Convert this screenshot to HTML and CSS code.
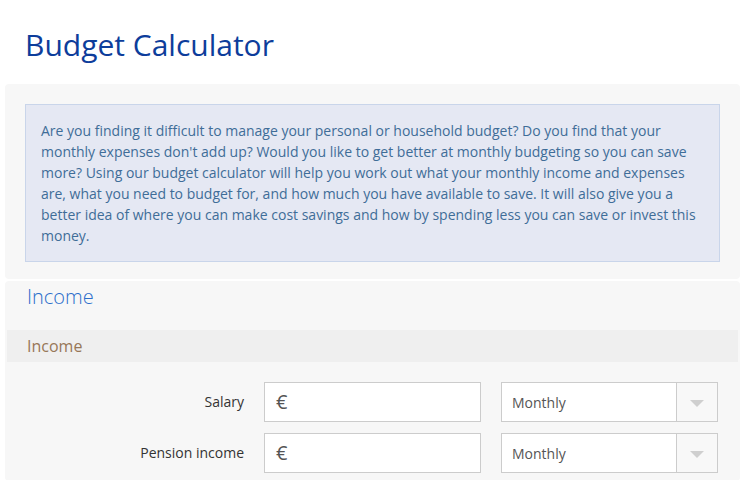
FILE: index.html
```html
<!DOCTYPE html>
<html lang="en">
<head>
<meta charset="utf-8">
<title>Budget Calculator</title>
<link rel="stylesheet" href="styles.css">
</head>
<body>
<h1 class="title">Budget Calculator</h1>
<section class="panel intro-panel">
  <div class="info">Are you finding it difficult to manage your personal or household budget? Do you find that your monthly expenses don't add up? Would you like to get better at monthly budgeting so you can save more? Using our budget calculator will help you work out what your monthly income and expenses are, what you need to budget for, and how much you have available to save. It will also give you a better idea of where you can make cost savings and how by spending less you can save or invest this money.</div>
</section>
<section class="panel income-panel">
  <h2 class="section-title">Income</h2>
  <div class="subheader">Income</div>
  <div class="rows">
    <div class="row">
      <label class="label">Salary</label>
      <div class="amount"><span class="euro">€</span></div>
      <div class="select"><span class="select-text">Monthly</span><span class="select-btn"><span class="arrow"></span></span></div>
    </div>
    <div class="row">
      <label class="label">Pension income</label>
      <div class="amount"><span class="euro">€</span></div>
      <div class="select"><span class="select-text">Monthly</span><span class="select-btn"><span class="arrow"></span></span></div>
    </div>
  </div>
</section>
</body>
</html>
```
FILE: styles.css
```css
* { box-sizing: border-box; }
html, body { margin: 0; padding: 0; background: #fff; }
body {
  font-family: "Open Sans", "Liberation Sans", sans-serif;
  color: #333;
  overflow: hidden;
}
.title {
  margin: 0;
  padding: 26px 0 0 25px;
  height: 84px;
  font-size: 30px;
  font-weight: 400;
  line-height: 38px;
  color: #0d3d9b;
}
.panel {
  margin-left: 5px;
  width: 735px;
  background: #f7f7f7;
  border-radius: 4px;
}
.intro-panel {
  padding: 20px 20px 17px 20px;
}
.info {
  background: #e5e8f3;
  border: 1px solid #c9d5ea;
  padding: 15px 15px 15px 15px;
  font-size: 14px;
  line-height: 21px;
  color: #3f6d98;
}
.income-panel {
  margin-top: 2px;
  padding: 1px 2px 0 2px;
  height: 200px;
}
.section-title {
  margin: 0;
  padding-left: 20px;
  height: 48px;
  font-size: 20px;
  font-weight: 300;
  line-height: 30px;
  color: #2c6ecb;
}
.subheader {
  height: 32px;
  background: #efefef;
  padding-left: 20px;
  font-size: 16px;
  line-height: 32px;
  color: #977758;
}
.rows {
  padding-top: 20px;
  display: flex;
  flex-direction: column;
  gap: 11px;
}
.row {
  display: grid;
  grid-template-columns: 237px 217px 217px;
  column-gap: 20px;
  align-items: center;
  height: 40px;
}
.label {
  text-align: right;
  font-size: 14px;
  line-height: 18px;
  margin-top: -1px;
  color: #333;
}
.amount {
  height: 40px;
  background: #fff;
  border: 1px solid #ccc;
  padding-left: 11px;
  display: flex;
  align-items: center;
}
.euro {
  font-size: 20px;
  color: #555;
  line-height: 1;
}
.select {
  height: 40px;
  background: #fff;
  border: 1px solid #ccc;
  display: flex;
}
.select-text {
  flex: 1;
  padding-left: 10px;
  padding-top: 1px;
  font-size: 14px;
  line-height: 38px;
  color: #555;
}
.select-btn {
  width: 41px;
  border-left: 1px solid #ccc;
  background: #f8f8f8;
  display: flex;
  align-items: center;
  justify-content: center;
}
.arrow {
  width: 0;
  height: 0;
  border-left: 7px solid transparent;
  border-right: 7px solid transparent;
  border-top: 7px solid #cfcfcf;
  margin-top: 2px;
}
```
